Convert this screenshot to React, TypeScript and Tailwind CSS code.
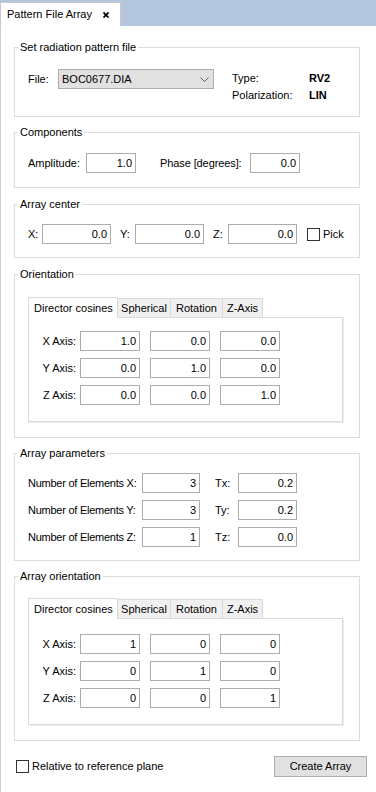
import React from "react";

function Box({ w, value, className = "" }: { w: string; value: string; className?: string }) {
  return (
    <div
      className={`${w} h-[20px] border border-[#acacac] bg-white flex items-center justify-end pr-[3px] ${className}`}
    >
      {value}
    </div>
  );
}

function Group({ title, className = "", children }: { title: string; className?: string; children: React.ReactNode }) {
  return (
    <fieldset className={`w-[346px] border border-[#dcdcdc] ${className}`}>
      <legend className="ml-[3px] px-[2px] leading-[13px]">{title}</legend>
      {children}
    </fieldset>
  );
}

function Check({ className = "" }: { className?: string }) {
  return <div className={`w-[13px] h-[13px] border border-[#333333] bg-white shrink-0 ${className}`} />;
}

function TabPane({ values, ptClass }: { values: string[][]; ptClass: string }) {
  const labels = ["X Axis:", "Y Axis:", "Z Axis:"];
  return (
    <div className="flex flex-col">
      <div className="flex items-end mb-[-1px] relative z-10">
        <div className="w-[90px] h-[21px] bg-white border-t border-l border-r border-[#d9d9d9] flex items-center pl-[5px]">
          Director cosines
        </div>
        <div className="w-[53px] h-[19px] mb-[1px] bg-[#f0f0f0] border-t border-r border-[#d9d9d9] flex items-center justify-center">
          Spherical
        </div>
        <div className="w-[52px] h-[19px] mb-[1px] bg-[#f0f0f0] border-t border-r border-[#d9d9d9] flex items-center justify-center">
          Rotation
        </div>
        <div className="w-[40px] h-[19px] mb-[1px] bg-[#f0f0f0] border-t border-r border-[#d9d9d9] flex items-center justify-center">
          Z-Axis
        </div>
      </div>
      <div className={`w-[315px] border border-[#d9d9d9] bg-white shadow-[1px_1px_0_#ececec] ${ptClass} pb-[16px] flex flex-col gap-[7px]`}>
        {labels.map((l, i) => (
          <div key={l} className="flex items-center">
            <div className="w-[47px] text-right">{l}</div>
            <Box w="w-[60px]" value={values[i][0]} className="ml-[4px]" />
            <Box w="w-[60px]" value={values[i][1]} className="ml-[10px]" />
            <Box w="w-[60px]" value={values[i][2]} className="ml-[10px]" />
          </div>
        ))}
      </div>
    </div>
  );
}

export default function App() {
  return (
    <div className="w-[376px] h-[792px] bg-white flex flex-col text-[11px] leading-[13px] text-black font-['Liberation_Sans',Arial,sans-serif] overflow-hidden">
      {/* tab bar */}
      <div className="h-[26px] bg-[#b3c6de] flex items-end shrink-0">
        <div className="w-[121px] h-[24px] bg-white border-t border-l border-r border-[#c8c8c8] flex items-center pl-[6px]">
          <span>Pattern File Array</span>
          <svg className="ml-[11px] mt-[1px]" width="6" height="6" viewBox="0 0 6 6">
            <path d="M0.5 0.5 L5.5 5.5 M5.5 0.5 L0.5 5.5" stroke="#000" strokeWidth="1.8" />
          </svg>
        </div>
      </div>

      {/* content */}
      <div className="flex-1 border-l border-[#d0d0d0] pl-[13px] pt-[15px] flex flex-col">
        <Group title="Set radiation pattern file">
          <div className="h-[62px] pt-[15px] pl-[13px] flex items-start">
            <div className="w-[30px] h-[20px] flex items-center">File:</div>
            <div className="w-[156px] h-[20px] bg-[#e1e1e1] border border-[#adadad] flex items-center pl-[3px] pr-[4px] justify-between">
              <span>BOC0677.DIA</span>
              <svg width="9" height="5" viewBox="0 0 9 5">
                <path d="M0.5 0.5 L4.5 4.5 L8.5 0.5" fill="none" stroke="#5a5a5a" strokeWidth="1" />
              </svg>
            </div>
            <div className="ml-[18px] mt-[1px] flex flex-col">
              <div className="h-[17px] flex items-center">
                <span className="w-[77px]">Type:</span>
                <span className="font-bold">RV2</span>
              </div>
              <div className="h-[17px] flex items-center">
                <span className="w-[77px]">Polarization:</span>
                <span className="font-bold">LIN</span>
              </div>
            </div>
          </div>
        </Group>

        <Group title="Components" className="mt-[9px]">
          <div className="h-[48px] pt-[14px] pl-[13px] flex items-start">
            <div className="w-[58px] h-[20px] flex items-center">Amplitude:</div>
            <Box w="w-[50px]" value="1.0" />
            <div className="ml-[24px] w-[90px] h-[20px] flex items-center tracking-[-0.1px]">Phase [degrees]:</div>
            <Box w="w-[50px]" value="0.0" />
          </div>
        </Group>

        <Group title="Array center" className="mt-[10px]">
          <div className="h-[46px] pt-[13px] pl-[13px] flex items-start">
            <div className="w-[14px] h-[20px] flex items-center">X:</div>
            <Box w="w-[69px]" value="0.0" />
            <div className="ml-[9px] w-[15px] h-[20px] flex items-center">Y:</div>
            <Box w="w-[69px]" value="0.0" />
            <div className="ml-[9px] w-[15px] h-[20px] flex items-center">Z:</div>
            <Box w="w-[69px]" value="0.0" />
            <div className="ml-[10px] h-[20px] flex items-center">
              <Check />
              <span className="ml-[3px]">Pick</span>
            </div>
          </div>
        </Group>

        <Group title="Orientation" className="mt-[10px]">
          <div className="pt-[16px] pb-[15px] pl-[13px]">
            <TabPane
              ptClass="pt-[13px]"
              values={[
                ["1.0", "0.0", "0.0"],
                ["0.0", "1.0", "0.0"],
                ["0.0", "0.0", "1.0"],
              ]}
            />
          </div>
        </Group>

        <Group title="Array parameters" className="mt-[9px]">
          <div className="pt-[13px] pb-[13px] pl-[13px] flex flex-col gap-[7px]">
            {[
              ["Number of Elements X:", "3", "Tx:", "0.2"],
              ["Number of Elements Y:", "3", "Ty:", "0.2"],
              ["Number of Elements Z:", "1", "Tz:", "0.0"],
            ].map((r) => (
              <div key={r[0]} className="flex items-center">
                <div className="w-[114px] tracking-[-0.25px]">{r[0]}</div>
                <Box w="w-[58px]" value={r[1]} />
                <div className="ml-[15px] w-[23px]">{r[2]}</div>
                <Box w="w-[59px]" value={r[3]} />
              </div>
            ))}
          </div>
        </Group>

        <Group title="Array orientation" className="mt-[9px]">
          <div className="pt-[15px] pb-[15px] pl-[13px]">
            <TabPane
              ptClass="pt-[15px]"
              values={[
                ["1", "0", "0"],
                ["0", "1", "0"],
                ["0", "0", "1"],
              ]}
            />
          </div>
        </Group>

        <div className="mt-[15px] h-[21px] flex items-center justify-between pr-[9px]">
          <div className="flex items-center ml-[2px]">
            <Check />
            <span className="ml-[3px]">Relative to reference plane</span>
          </div>
          <div className="w-[93px] h-[21px] bg-[#e1e1e1] border border-[#adadad] flex items-center justify-center">
            Create Array
          </div>
        </div>
      </div>
    </div>
  );
}
